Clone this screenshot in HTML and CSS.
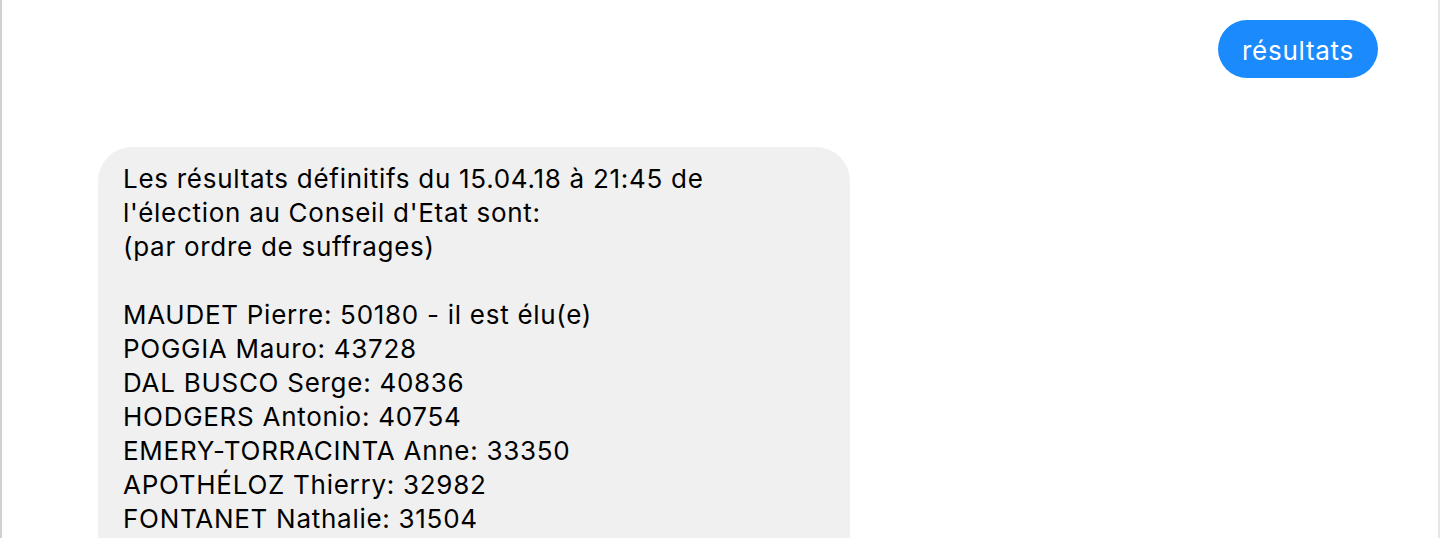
FILE: index.html
```html
<!DOCTYPE html>
<html lang="fr">
<head>
<meta charset="utf-8">
<title>Chat</title>
<link rel="stylesheet" href="styles.css">
</head>
<body>
<div class="frame">
  <div class="row row-out">
    <div class="bubble bubble-out">résultats</div>
  </div>
  <div class="row row-in">
    <div class="bubble bubble-in">
      <span class="line">Les résultats définitifs du 15.04.18 à 21:45 de</span>
      <span class="line">l'élection au Conseil d'Etat sont:</span>
      <span class="line">(par ordre de suffrages)</span>
      <span class="line">&nbsp;</span>
      <span class="line">MAUDET Pierre: 50180 - il est élu(e)</span>
      <span class="line">POGGIA Mauro: 43728</span>
      <span class="line">DAL BUSCO Serge: 40836</span>
      <span class="line">HODGERS Antonio: 40754</span>
      <span class="line">EMERY-TORRACINTA Anne: 33350</span>
      <span class="line">APOTHÉLOZ Thierry: 32982</span>
      <span class="line">FONTANET Nathalie: 31504</span>
    </div>
  </div>
</div>
</body>
</html>
```

FILE: styles.css
```css
html, body {
  margin: 0;
  padding: 0;
  background: #ffffff;
}
body {
  height: 538px;
  overflow: hidden;
  font-family: Inter, "Liberation Sans", sans-serif;
}
.frame {
  box-sizing: border-box;
  height: 538px;
  border-left: 2px solid #d0d0d0;
  border-right: 2px solid #e6e6e6;
  padding-top: 20px;
  display: flex;
  flex-direction: column;
  gap: 69px;
  overflow: hidden;
}
.row {
  display: flex;
  flex-shrink: 0;
}
.row-out {
  justify-content: flex-end;
  padding-right: 60px;
}
.row-in {
  justify-content: flex-start;
  padding-left: 96px;
}
.bubble {
  font-size: 26px;
  line-height: 34px;
  letter-spacing: 0.72px;
  box-sizing: border-box;
}
.bubble-out {
  background: #1a8afd;
  color: #ffffff;
  border-radius: 29px;
  padding: 14px 24px 10px;
  height: 58px;
  white-space: nowrap;
}
.bubble-in {
  background: #f0f0f0;
  color: #000000;
  width: 752px;
  border-radius: 34px;
  padding: 15px 25px 80px;
  flex-shrink: 0;
}
.line {
  display: block;
  white-space: nowrap;
}
```
